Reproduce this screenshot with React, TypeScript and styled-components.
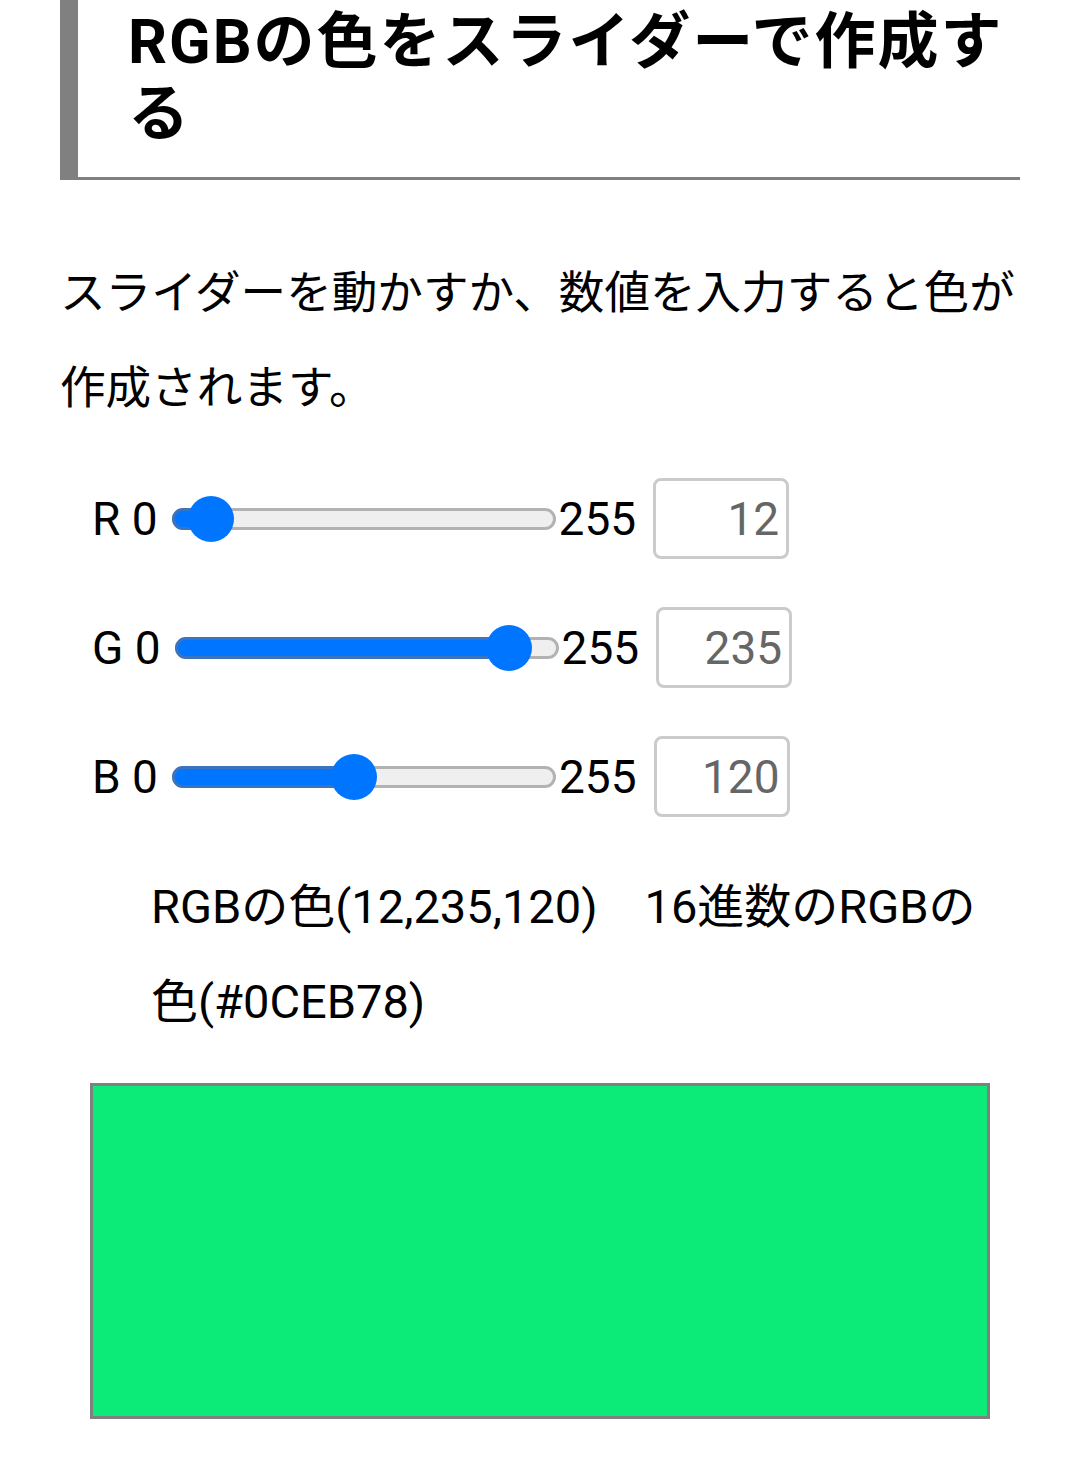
import React, { useState } from 'react';
import styled, { createGlobalStyle } from 'styled-components';

const MAX = 255;
const TRACK_W = 384;
const THUMB = 46;

const GlobalStyle = createGlobalStyle`
  body {
    margin: 0;
    background: #fff;
    color: #000;
    font-family: Roboto, "Noto Sans CJK JP", sans-serif;
  }
`;

type Channel = 'r' | 'g' | 'b';

const clamp = (n: number) => Math.max(0, Math.min(MAX, Math.round(n)));
const hex = (n: number) => n.toString(16).toUpperCase().padStart(2, '0');

const Slider: React.FC<{ value: number }> = ({ value }) => {
  // thumb centre measured from the track's outer left edge
  const center = THUMB / 2 + (value / MAX) * (TRACK_W - THUMB);
  return (
    <Track>
      <Fill style={{ width: center + 3 }} />
      <Thumb style={{ left: center - 3 }} />
    </Track>
  );
};

const App: React.FC = () => {
  const [rgb, setRgb] = useState<Record<Channel, number>>({ r: 12, g: 235, b: 120 });

  const update = (c: Channel) => (e: React.ChangeEvent<HTMLInputElement>) => {
    const n = Number(e.target.value);
    setRgb((prev) => ({ ...prev, [c]: Number.isNaN(n) ? 0 : clamp(n) }));
  };

  const rows: { key: Channel; label: string }[] = [
    { key: 'r', label: 'R' },
    { key: 'g', label: 'G' },
    { key: 'b', label: 'B' },
  ];

  const summary =
    `RGBの色(${rgb.r},${rgb.g},${rgb.b})　` +
    `16進数のRGBの色(#${hex(rgb.r)}${hex(rgb.g)}${hex(rgb.b)})`;

  return (
    <Page>
      <GlobalStyle />
      <Heading>RGBの色をスライダーで作成する</Heading>

      <Lead>スライダーを動かすか、数値を入力すると色が作成されます。</Lead>

      <Controls>
        {rows.map(({ key, label }) => (
          <Row key={key}>
            <Label>{`${label} 0`}</Label>
            <Slider value={rgb[key]} />
            <MaxLabel>255</MaxLabel>
            <NumberBox value={rgb[key]} onChange={update(key)} inputMode="numeric" />
          </Row>
        ))}
      </Controls>

      <Result>{summary}</Result>

      <Swatch style={{ background: `rgb(${rgb.r}, ${rgb.g}, ${rgb.b})` }} />
    </Page>
  );
};

export default App;

/* ── Styles ───────────────────────────────────────── */

const Page = styled.main`
  padding: 0 60px 51px;
`;

const Heading = styled.h2`
  margin: 0;
  padding: 6px 0 27px 50px;
  border-left: 18px solid #808080;
  border-bottom: 3px solid #808080;
  font-size: 61px;
  line-height: 72px;
  font-weight: 700;
  letter-spacing: 2px;
`;

const Lead = styled.p`
  margin: 66px 0 0;
  font-size: 45.6px;
  line-height: 95px;
`;

const Controls = styled.div`
  display: flex;
  flex-direction: column;
  gap: 48px;
  margin-top: 42px;
  padding-left: 32px;
`;

const Row = styled.div`
  display: flex;
  align-items: center;
  height: 81px;
  font-size: 46px;
`;

const Label = styled.span`
  white-space: pre;
`;

const Track = styled.div`
  position: relative;
  flex: none;
  box-sizing: border-box;
  width: ${TRACK_W}px;
  height: 22px;
  margin-left: 14px;
  border: 3px solid #b2b2b2;
  border-radius: 11px;
  background: #efefef;
`;

const Fill = styled.div`
  position: absolute;
  left: -3px;
  top: -3px;
  bottom: -3px;
  box-sizing: border-box;
  border: 3px solid #3b74bd;
  border-radius: 11px;
  background: #0075ff;
`;

const Thumb = styled.div`
  position: absolute;
  top: 50%;
  width: ${THUMB}px;
  height: ${THUMB}px;
  border-radius: 50%;
  background: #0075ff;
  transform: translate(-50%, -50%);
`;

const MaxLabel = styled.span`
  margin-left: 3px;
`;

const NumberBox = styled.input`
  box-sizing: border-box;
  width: 136px;
  height: 81px;
  margin-left: 17px;
  padding: 0 7px;
  border: 3px solid #cbcbcb;
  border-radius: 8px;
  font-family: inherit;
  font-size: 46px;
  color: #666;
  text-align: right;
  outline: none;
`;

const Result = styled.p`
  margin: 42px 0 0;
  padding: 0 20px 0 91px;
  font-size: 47px;
  line-height: 95px;
`;

const Swatch = styled.div`
  box-sizing: border-box;
  height: 336px;
  margin: 34px 30px 0;
  border: 3px solid #808080;
`;
